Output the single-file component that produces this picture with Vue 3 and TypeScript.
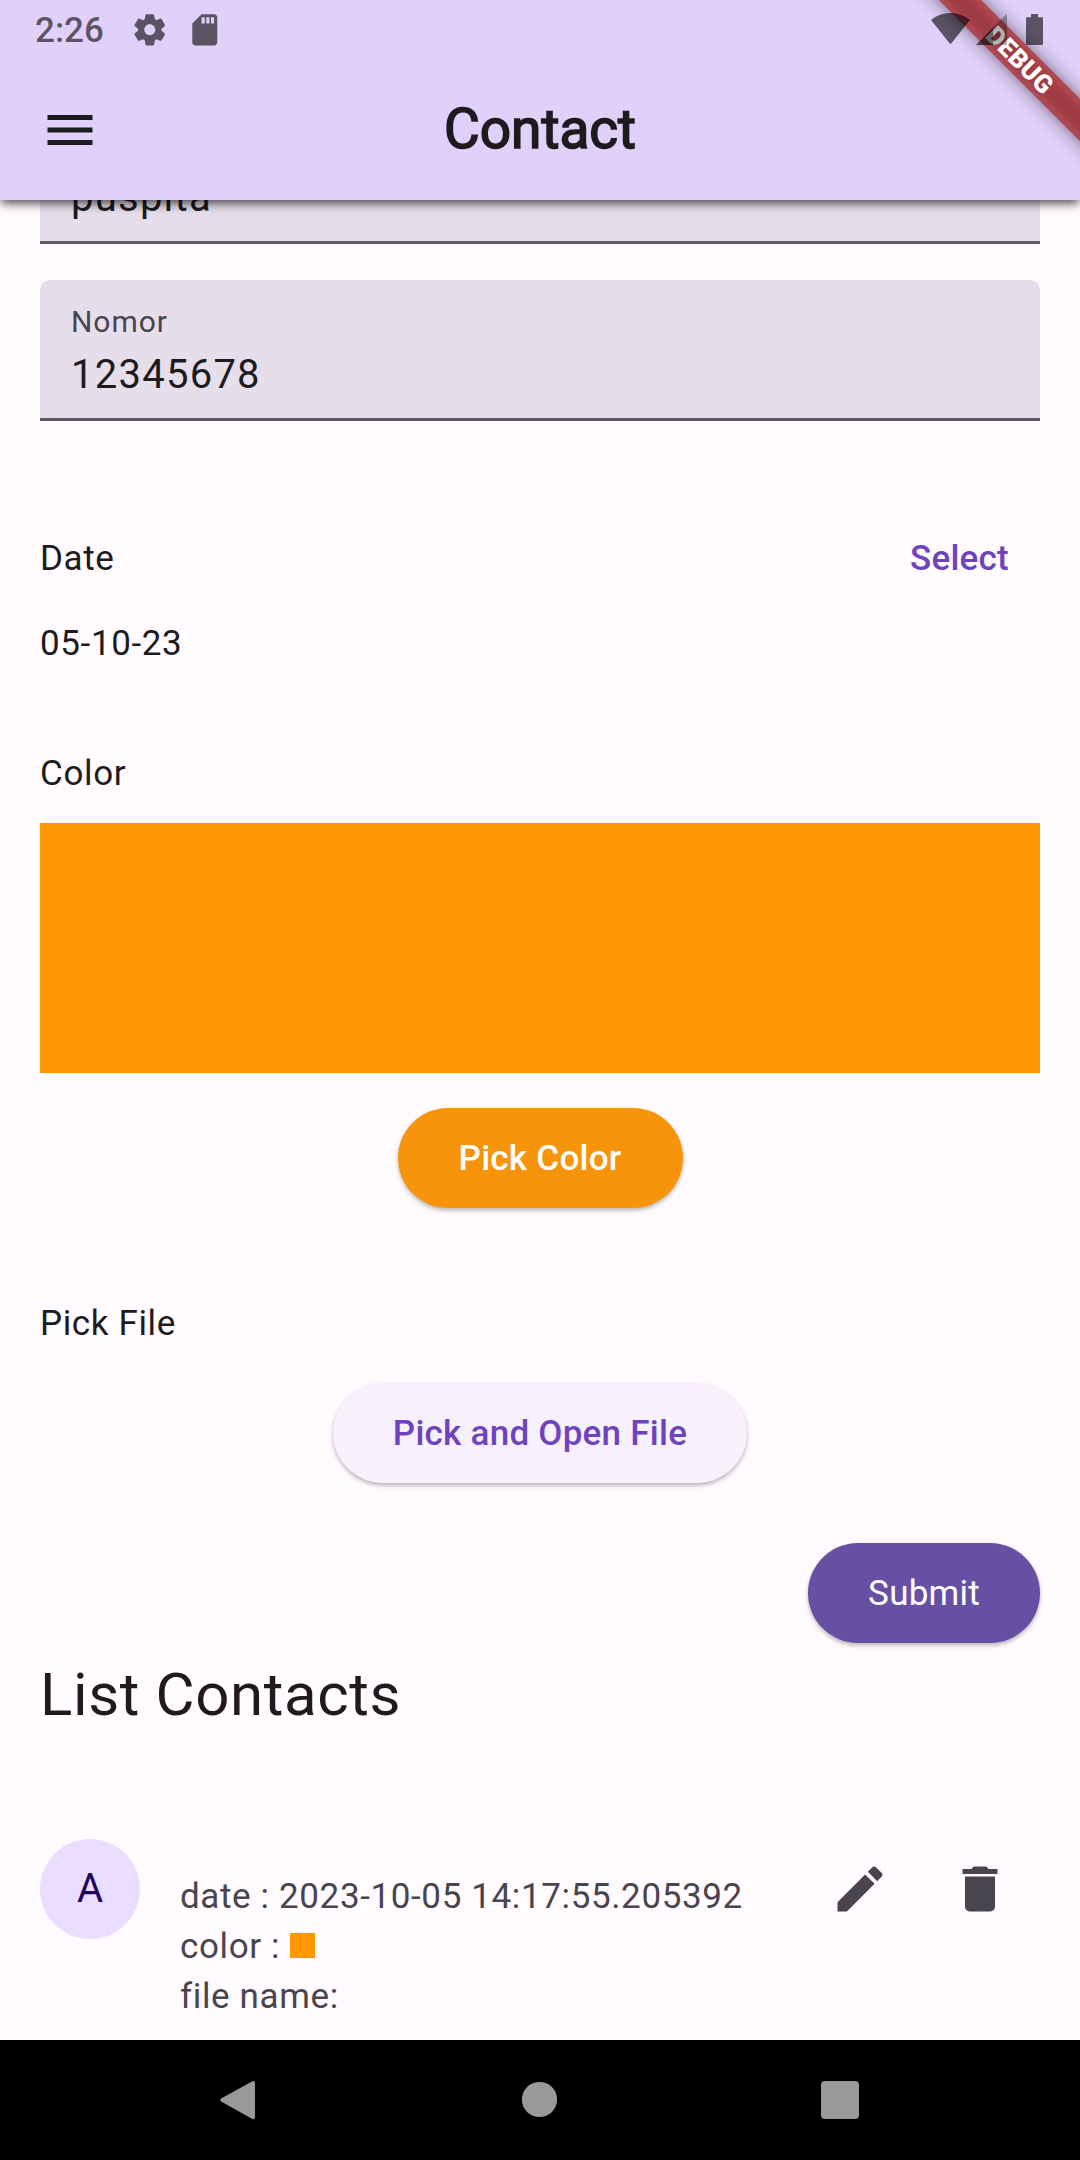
<script setup lang="ts">
import { ref } from 'vue'

interface Contact {
  initial: string
  date: string
  color: string
  fileName: string
}

const name = ref('puspita')
const phone = ref('12345678')
const date = ref('05-10-23')
const color = ref('#ff9800')
const contacts = ref<Contact[]>([
  { initial: 'A', date: '2023-10-05 14:17:55.205392', color: '#ff9800', fileName: '' },
])
</script>

<template>
  <div class="screen">
    <header class="app-bar">
      <div class="toolbar">
        <svg class="menu" viewBox="0 0 24 24"><path d="M3 18h18v-2H3v2zm0-5h18v-2H3v2zm0-7v2h18V6H3z" /></svg>
        <h1 class="title">Contact</h1>
      </div>
      <div class="ribbon-clip">
        <div class="ribbon-shadow"></div>
        <div class="ribbon">DEBUG</div>
      </div>
      <div class="status">
        <span class="clock">2:26</span>
        <svg class="gear" viewBox="0 0 24 24">
          <path d="M19.5 12c0-.23-.01-.45-.03-.68l1.86-1.41c.4-.3.51-.86.26-1.3l-1.87-3.23c-.25-.44-.79-.62-1.25-.42l-2.15.91c-.37-.26-.76-.49-1.17-.68l-.29-2.31C14.8 2.38 14.37 2 13.87 2h-3.73c-.51 0-.94.38-1 .88l-.29 2.31c-.41.19-.8.42-1.17.68l-2.15-.91c-.46-.2-1-.02-1.25.42L2.41 8.62c-.25.44-.14.99.26 1.3l1.86 1.41C4.51 11.55 4.5 11.77 4.5 12s.01.45.03.68l-1.86 1.41c-.4.3-.51.86-.26 1.3l1.87 3.23c.25.44.79.62 1.25.42l2.15-.91c.37.26.76.49 1.17.68l.29 2.31c.06.5.49.88.99.88h3.73c.5 0 .93-.38.99-.88l.29-2.31c.41-.19.8-.42 1.17-.68l2.15.91c.46.2 1 .02 1.25-.42l1.87-3.23c.25-.44.14-.99-.26-1.3l-1.86-1.41c.03-.23.04-.45.04-.68zm-7.46 3.5c-1.93 0-3.5-1.57-3.5-3.5s1.57-3.5 3.5-3.5 3.5 1.57 3.5 3.5-1.57 3.5-3.5 3.5z" />
        </svg>
        <svg class="sd" viewBox="0 0 24 24">
          <path d="M18 2h-8L4.020 8 4 20c0 1.100.900 2 2 2h12c1.100 0 2-.900 2-2V4c0-1.100-.900-2-2-2zm-6 6h-2V4h2v4zm3 0h-2V4h2v4zm3 0h-2V4h2v4z" />
        </svg>
        <svg class="signals" viewBox="0 0 120 60">
          <path d="M1 20C12 10.500 29 10.500 40 20L21.800 42.800Q20.500 44.500 19.200 42.800Z" />
          <path d="M46 45L63 27.500V45Z" />
          <path class="faint" d="M63 27.500L75.500 15Q77 13.500 77 15.500V45H63Z" />
          <path d="M101 14H108V17.300H112Q113 17.300 113 18.300V44Q113 45 112 45H97Q96 45 96 44V18.300Q96 17.300 97 17.300H101Z" />
        </svg>
      </div>
    </header>

    <main class="content">
      <div class="field first">
        <span class="value">{{ name }}</span>
      </div>
      <div class="field">
        <span class="label">Nomor</span>
        <span class="value">{{ phone }}</span>
      </div>

      <div class="date-row">
        <span class="text">Date</span>
        <button class="link">Select</button>
      </div>
      <p class="text">{{ date }}</p>

      <p class="text color-label">Color</p>
      <div class="swatch" :style="{ background: color }"></div>
      <button class="pill pick-color">Pick Color</button>

      <p class="text file-label">Pick File</p>
      <button class="pill pick-file">Pick and Open File</button>
      <button class="pill submit">Submit</button>

      <h2 class="heading">List Contacts</h2>
      <div v-for="c in contacts" :key="c.date" class="contact">
        <div class="avatar">{{ c.initial }}</div>
        <div class="details">
          <p>date : {{ c.date }}</p>
          <p class="color-line">color :<i class="chip" :style="{ background: c.color }"></i></p>
          <p>file name: {{ c.fileName }}</p>
        </div>
        <div class="actions">
          <svg viewBox="0 0 24 24"><path d="M3 17.250V21h3.750L17.810 9.940l-3.750-3.750L3 17.250zM20.710 7.040c.390-.390.390-1.020 0-1.410l-2.340-2.340c-.390-.390-1.020-.390-1.410 0l-1.830 1.830 3.750 3.750 1.830-1.830z" /></svg>
          <svg viewBox="0 0 24 24"><path d="M6 19c0 1.100.900 2 2 2h8c1.100 0 2-.900 2-2V7H6v12zM19 4h-3.500l-1-1h-5l-1 1H5v2h14V4z" /></svg>
        </div>
      </div>
    </main>

    <nav class="nav">
      <svg viewBox="0 0 1080 120">
        <path d="M252 41.500L221.500 58.200Q219 60 221.500 61.800L252 78.800Q255 80.200 255 77V43Q255 40 252 41.500Z" />
        <circle cx="539.500" cy="59.500" r="17.600" />
        <rect x="821" y="41" width="38" height="38" rx="4" />
      </svg>
    </nav>
  </div>
</template>

<style>
body {
  margin: 0;
}
</style>

<style scoped>
.screen {
  width: 1080px;
  height: 2160px;
  display: flex;
  flex-direction: column;
  overflow: hidden;
  background: #fffbff;
  color: #1d1b1e;
  font-family: Roboto, "Liberation Sans", sans-serif;
}

p,
h1,
h2 {
  margin: 0;
  font-weight: 400;
}

button {
  border: 0;
  font: 500 35px/50px Roboto, "Liberation Sans", sans-serif;
  letter-spacing: 0.25px;
}

.app-bar {
  position: relative;
  z-index: 1;
  flex: none;
  box-sizing: border-box;
  height: 200px;
  padding-top: 60px;
  background: #e1d0f9;
  box-shadow: 0 4px 10px -1px rgba(0, 0, 0, 0.75);
}

.toolbar {
  display: grid;
  grid-template-columns: 60px 1fr 60px;
  align-items: center;
  height: 140px;
  padding: 0 40px;
}

.menu {
  width: 60px;
  height: 60px;
  fill: #1d1b1e;
}

.title {
  text-align: center;
  font-size: 55px;
  line-height: 70px;
  margin-bottom: 2px;
  -webkit-text-stroke: 1.6px #1d1b1e;
}

.status {
  position: absolute;
  inset: 0 0 auto;
  display: flex;
  align-items: center;
  height: 60px;
  padding: 0 0 0 35px;
  color: rgba(0, 0, 0, 0.6);
  fill: rgba(0, 0, 0, 0.6);
}

.clock {
  width: 95.500px;
  padding-top: 2px;
  font-size: 35px;
  font-weight: 500;
  line-height: 62px;
}

.gear,
.sd {
  width: 37.500px;
  height: 37.500px;
}

.sd {
  margin-left: 17.500px;
}

.signals {
  width: 120px;
  height: 60px;
  margin-left: auto;
  margin-right: 30px;
}

.faint {
  fill: rgba(0, 0, 0, 0.3);
}

.ribbon-clip {
  position: absolute;
  top: 0;
  right: 0;
  width: 240px;
  height: 200px;
  overflow: hidden;
}

.ribbon,
.ribbon-shadow {
  position: absolute;
  left: 30px;
  top: 44.500px;
  width: 300px;
  height: 30px;
  transform: rotate(45deg);
}

.ribbon {
  background: rgba(183, 28, 28, 0.627);
  color: #fff;
  font-size: 25.500px;
  font-weight: 900;
  line-height: 30px;
  letter-spacing: 0.300px;
  text-align: center;
}

.ribbon-shadow {
  background: rgba(0, 0, 0, 0.5);
  filter: blur(9px);
}

.content {
  flex: 1;
  min-height: 0;
  display: flex;
  flex-direction: column;
  overflow: hidden;
  padding: 0 40px;
}

.content > * {
  flex: none;
}

.field {
  box-sizing: border-box;
  display: flex;
  flex-direction: column;
  height: 141px;
  margin-bottom: 36px;
  padding: 22px 30px 0 31px;
  border-bottom: 3px solid #5e5964;
  border-radius: 10px 10px 0 0;
  background: #e6dfeb;
}

.first {
  margin-top: -97px;
  padding-top: 62px;
}

.label {
  font-size: 30px;
  line-height: 40px;
  letter-spacing: 0.940px;
  color: #49454e;
}

.value {
  margin-top: 3px;
  font-size: 40px;
  line-height: 60px;
  letter-spacing: 1.250px;
}

.text {
  font-size: 35px;
  line-height: 50px;
  letter-spacing: 0.625px;
}

.date-row {
  display: flex;
  align-items: center;
  justify-content: space-between;
  height: 120px;
  margin-top: 42px;
}

.link {
  padding: 0 31px;
  background: none;
  color: #6f43c0;
}

.color-label {
  margin-top: 80px;
}

.swatch {
  height: 250px;
  margin-top: 23.500px;
}

.pill {
  height: 100px;
  padding: 2px 60px 0;
  border-radius: 50px;
  box-shadow: 0 2.500px 4px rgba(0, 0, 0, 0.28);
}

.pick-color {
  align-self: center;
  width: 285px;
  margin-top: 35px;
  background: #f8940a;
  color: #fff;
}

.file-label {
  margin-top: 91.500px;
}

.pick-file {
  align-self: center;
  margin-top: 33.500px;
  background: #f6f1fb;
  color: #6f43c0;
}

.submit {
  align-self: flex-end;
  margin-top: 60px;
  background: #6750a4;
  color: #fff;
  font-weight: 400;
}

.heading {
  margin-top: 7px;
  font-size: 60px;
  line-height: 90px;
  letter-spacing: 0.625px;
}

.contact {
  display: flex;
  align-items: flex-start;
  margin-top: 99.500px;
}

.avatar {
  width: 100px;
  height: 100px;
  border-radius: 50%;
  background: #eaddff;
  color: #22005d;
  font-size: 40px;
  line-height: 99px;
  text-align: center;
}

.details {
  margin-left: 40px;
  padding-top: 32.700px;
  color: #49454e;
  font-size: 35px;
  line-height: 50px;
  letter-spacing: 0.625px;
  white-space: nowrap;
}

.color-line {
  display: flex;
}

.chip {
  width: 25px;
  height: 25px;
  margin: 11px 0 0 10px;
}

.actions {
  display: flex;
  gap: 60px;
  margin: 20px 30px 0 auto;
}

.actions svg {
  width: 60px;
  height: 60px;
  fill: #49454e;
}

.nav {
  flex: none;
  height: 120px;
  background: #000;
}

.nav svg {
  display: block;
  width: 1080px;
  height: 120px;
  fill: #999;
}
</style>
